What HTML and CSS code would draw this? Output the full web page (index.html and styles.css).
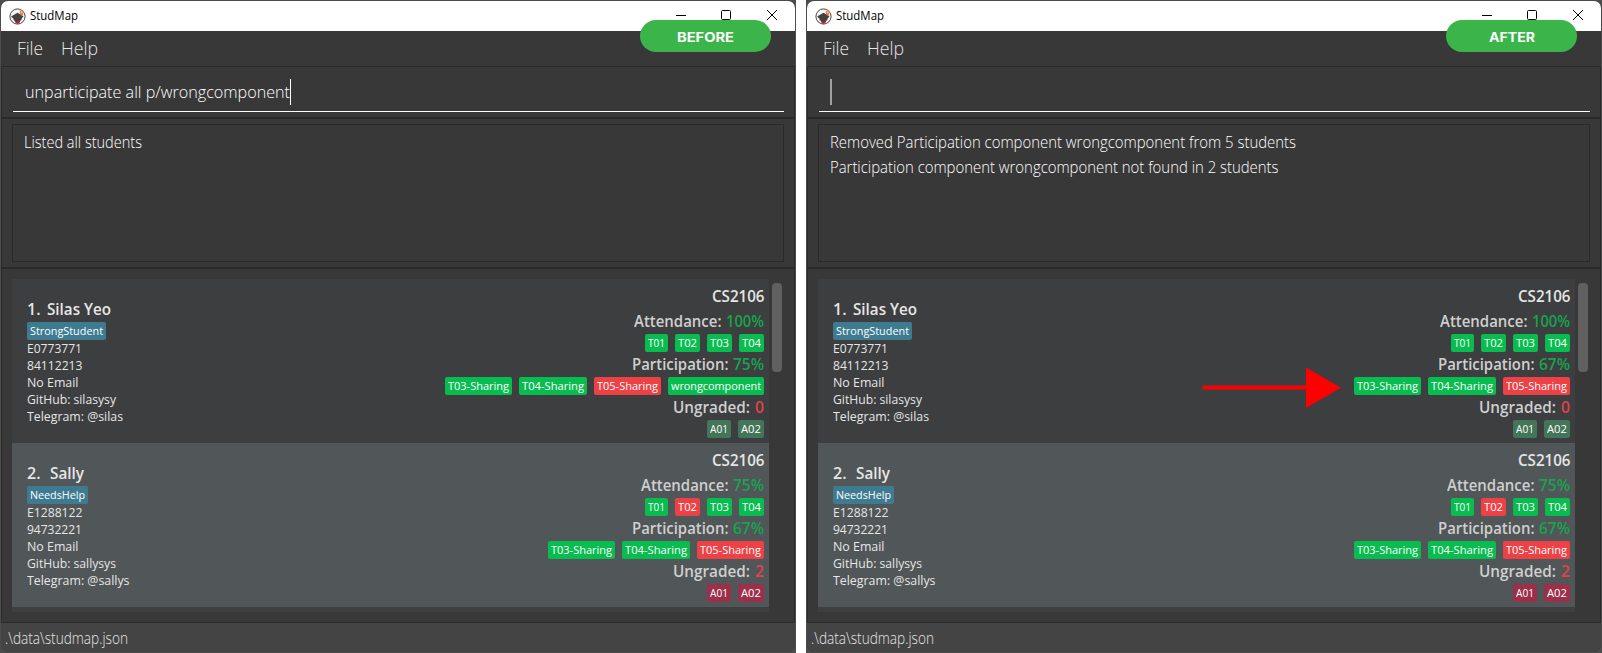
FILE: index.html
```
<!DOCTYPE html>
<html lang="en">
<head>
<meta charset="utf-8">
<title>StudMap</title>
<link rel="stylesheet" href="styles.css">
</head>
<body>
<main class="compare" id="compare"></main>
<svg class="pointer" width="140" height="42" viewBox="0 0 140 42"><path d="M2 20.5H106" stroke="#f00" stroke-width="4" stroke-linecap="round"/><path d="M104 0.5L139 20.8L104 41Z" fill="#f00"/></svg>
<script src="app.js"></script>
</body>
</html>
```

FILE: styles.css
```
* { box-sizing: border-box; }
body { margin: 0; background: #fff; font-family: "Open Sans", "Noto Sans", sans-serif; overflow: hidden; color: #e6e6e6; }
.compare { display: grid; grid-template-columns: 796px 796px; gap: 10px; width: 1602px; height: 653px; }
.desktop { position: relative; background: #4c4c4d; padding: 1px 1px 0; height: 653px; overflow: hidden; }
.window { height: 651px; border-radius: 7px; overflow: hidden; background: #383838; display: flex; flex-direction: column; }
.fit { display: inline-block; white-space: pre; transform-origin: 0 50%; flex: none; }
.titlebar { height: 30px; flex: none; background: #fff; color: #000; display: flex; align-items: center; padding: 0 18px 0 8px; }
.app-icon { width: 17px; height: 17px; margin-right: 4px; }
.app-name { font-size: 12px; line-height: 30px; }
.controls { margin-left: auto; display: flex; gap: 35px; height: 30px; padding-bottom: 2px; align-items: center; }
.controls svg { width: 10px; height: 10px; display: block; }
.controls .close { margin-left: 1px; }
.menu { height: 35px; flex: none; display: flex; padding-left: 16px; gap: 18px; font-weight: 300; font-size: 18.5px; line-height: 33px; }
.command { height: 53px; flex: none; border: 1px solid #2a2a2a; border-bottom: 2px solid #2a2a2a; padding: 0 10px 0 11px; display: flex; }
.field { flex: 1; height: 45px; border-bottom: 1px solid #fff; padding-left: 12px; display: flex; align-items: center; font-weight: 300; font-size: 16.5px; color: #fff; }
.field .fit { line-height: 51px; height: 46px; }
.caret { width: 1px; height: 26px; background: #fff; margin-top: 6px; }
.caret.dim { width: 2px; background: #a0a0a0; margin-left: -1px; }
.result { height: 150px; flex: none; border: 1px solid #2a2a2a; border-width: 0 1px 2px; padding: 5px 10px; }
.result-box { height: 138px; width: 772px; border: 1px solid #2a2a2a; padding: 5px 11px; font-weight: 300; font-size: 16px; line-height: 25px; color: #fff; }
.list { height: 354px; flex: none; border: 1px solid #2a2a2a; border-top: 0; padding: 10px 10px 0; display: flex; }
.cards { width: 757px; height: 333px; background: #3e3f41; }
.scroll { width: 10px; height: 89px; margin: 4px 0 0 3px; border-radius: 4px; background: #606060; }
.card { height: 164px; background: #3c3e3f; padding: 0 5px 0 15px; display: flex; justify-content: space-between; }
.card.alt { background: #515658; }
.info { padding-top: 18px; font-size: 13px; line-height: 17px; }
.name { display: flex; font-size: 16px; line-height: 24px; font-weight: 600; margin-bottom: 1px; }
.name .index { width: 20px; flex: none; }
.name .index.wide { width: 23px; }
.tag { height: 18px; border-radius: 2px; padding: 0 3px; font-size: 11px; line-height: 18px; color: #fff; display: block; width: max-content; white-space: nowrap; }
.blue { background: #3e7b91; }
.green { background: #09bc50; }
.red { background: #ed4245; }
.done { background: #437558; }
.late { background: #9b304b; }
.grades { padding-top: 5px; display: flex; flex-direction: column; align-items: flex-end; font-size: 16px; font-weight: 600; line-height: 25px; color: #cfcfcf; }
.grades .module { height: 25px; line-height: 25px; color: #e6e6e6; }
.stat { display: flex; gap: 5px; height: 25px; line-height: 25px; }
.good { color: #17a44f; }
.bad { color: #e04447; }
.tags { display: flex; gap: 7px; font-weight: 400; }
.status { flex: 1; background: #444; padding-left: 4px; font-size: 15.5px; font-weight: 300; line-height: 30px; }
.badge { position: absolute; left: 640px; top: 20px; width: 131px; height: 32px; border-radius: 16px; background: #3bb54a; color: #fff; font: 700 13px/34px Inter, sans-serif; text-align: center; }
.badge .fit { transform-origin: 0 50%; }
.pointer { position: absolute; left: 1202px; top: 367px; }
```

FILE: app.js
```
const fit = (text, width) => `<span class="fit" data-width="${width}">${text}</span>`;
const tag = ([text, color, width]) => `<span class="tag ${color}" style="width:${width}px">${fit(text, width - 6)}</span>`;
const tags = list => `<div class="tags">${list.map(tag).join('')}</div>`;

const card = s => `
<section class="card ${s.alt ? 'alt' : ''}">
  <div class="info">
    <div class="name"><span class="index ${s.alt ? 'wide' : ''}">${s.index}.</span>${fit(s.name, s.nameWidth)}</div>
    ${tag(s.label)}
    ${s.lines.map(([t, w]) => `<div>${fit(t, w)}</div>`).join('')}
  </div>
  <div class="grades">
    <div class="module">${fit('CS2106', 52.5)}</div>
    <div class="stat">${fit('Attendance:', 87.5)}<span class="good">${fit(s.attendance, s.attendance.length > 3 ? 38 : 31)}</span></div>
    ${tags(s.sessions)}
    <div class="stat">${fit('Participation:', 96.5)}<span class="good">${fit(s.participation, 31)}</span></div>
    ${tags(s.components)}
    <div class="stat">${fit('Ungraded:', 77)}<span class="bad">${fit(s.ungraded, 9)}</span></div>
    ${tags(s.assignments)}
  </div>
</section>`;

const sharing = [['T03-Sharing', 'green', 67], ['T04-Sharing', 'green', 68], ['T05-Sharing', 'red', 67]];
const sessions = second => [['T01', 'green', 23], ['T02', second, 25], ['T03', 'green', 25], ['T04', 'green', 25]];
const assignments = c => [['A01', c, 24], ['A02', c, 26]];

const silas = (participation, components) => ({
  index: 1, name: 'Silas Yeo', nameWidth: 64, label: ['StrongStudent', 'blue', 79],
  lines: [['E0773771', 55], ['84112213', 55.5], ['No Email', 51.5], ['GitHub: silasysy', 89], ['Telegram: @silas', 96]],
  attendance: '100%', sessions: sessions('green'), participation, components, ungraded: '0', assignments: assignments('done')
});
const sally = {
  alt: true, index: 2, name: 'Sally', nameWidth: 34, label: ['NeedsHelp', 'blue', 61],
  lines: [['E1288122', 55.5], ['94732221', 55], ['No Email', 51.5], ['GitHub: sallysys', 89], ['Telegram: @sallys', 102.5]],
  attendance: '75%', sessions: sessions('red'), participation: '67%', components: sharing, ungraded: '2', assignments: assignments('late')
};

const shot = v => `
<div class="desktop">
  <div class="window">
    <header class="titlebar">
      <svg class="app-icon" viewBox="0 0 17 17"><circle cx="8.5" cy="8.5" r="7.6" fill="#f4f4f4" stroke="#444" stroke-width="1"/><path d="M5.5 12l3 1.5 3-1.5-.8 2.6-2.2 1.4-2.2-1.4z" fill="#c5161d"/><path d="M2 8.6l6.5-3.9 6 3.6-2 2.4v1.3l-4 2-4-2v-1.2z" fill="#414141"/><path d="M12.8 8c-1.6-2.2-2.3-3-2-4.3.4-1.5 2-2.1 3.3-1.2 1.2 1 .5 3.2-1.3 5.5z" fill="#ee6b36"/><circle cx="12.7" cy="4.2" r="1" fill="#fbd6b8"/></svg>
      <span class="app-name">${fit('StudMap', 48)}</span>
      <div class="controls">
        <svg viewBox="0 0 10 10"><path d="M0 5.5h10" stroke="#000"/></svg>
        <svg viewBox="0 0 10 10"><rect x=".5" y=".5" width="9" height="9" rx="1" fill="none" stroke="#000"/></svg>
        <svg class="close" viewBox="0 0 10 10"><path d="M0 0l10 10M10 0L0 10" stroke="#000"/></svg>
      </div>
    </header>
    <nav class="menu">${fit('File', 26)}${fit('Help', 37)}</nav>
    <div class="command"><div class="field">${v.command ? fit(v.command, 265) : ''}<i class="caret ${v.command ? '' : 'dim'}"></i></div></div>
    <div class="result"><div class="result-box">${v.result.map(([t, w]) => `<div>${fit(t, w)}</div>`).join('')}</div></div>
    <div class="list"><div class="cards">${card(v.silas)}${card(sally)}</div><div class="scroll"></div></div>
    <footer class="status">${fit('.\\data\\studmap.json', 123)}</footer>
  </div>
  <div class="badge">${fit(...v.badge)}</div>
</div>`;

document.getElementById('compare').innerHTML = shot({
  badge: ['BEFORE', 57], command: 'unparticipate all p/wrongcomponent', result: [['Listed all students', 118]],
  silas: silas('75%', [...sharing, ['wrongcomponent', 'green', 96]])
}) + shot({
  badge: ['AFTER', 46], command: '',
  result: [['Removed Participation component wrongcomponent from 5 students', 466], ['Participation component wrongcomponent not found in 2 students', 448.5]],
  silas: silas('67%', sharing)
});

// Condense each label so that it takes up its own width.
const labels = [...document.querySelectorAll('.fit')];
const natural = labels.map(el => el.getBoundingClientRect().width);
labels.forEach((el, i) => {
  const width = Number(el.dataset.width);
  el.style.transform = `scaleX(${width / natural[i]})`;
  el.style.marginRight = width - natural[i] + 'px';
});
```
